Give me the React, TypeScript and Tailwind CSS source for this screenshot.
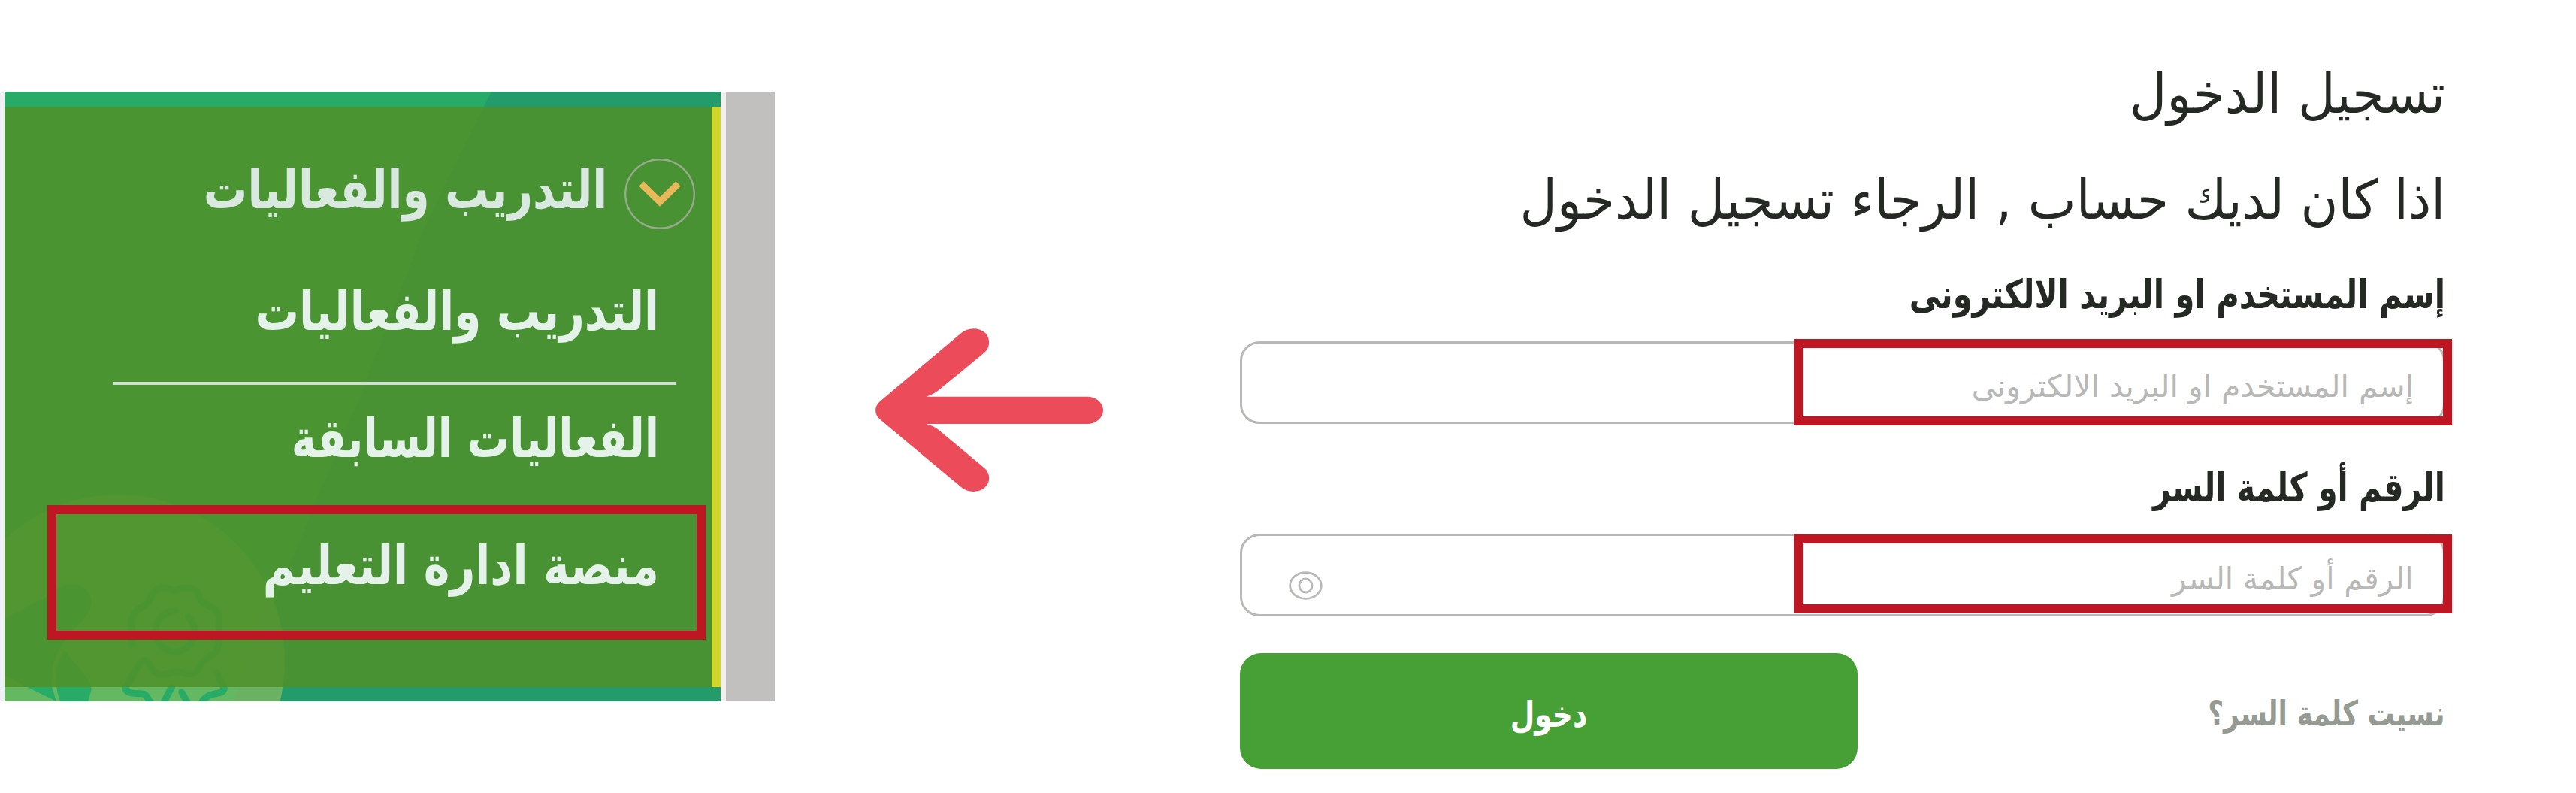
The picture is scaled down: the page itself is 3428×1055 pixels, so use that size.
import { ReactNode } from 'react';
import clsx from 'clsx';

// Line of Arabic text, condensed towards its right edge
function Line({ className, children }: { className?: string; children: ReactNode }) {
  return <span className={clsx('block whitespace-nowrap origin-right', className)}>{children}</span>;
}

function MenuBackground() {
  return (
    <svg className="absolute inset-0 w-full h-full" viewBox="0 0 953 811" preserveAspectRatio="none" fill="none">
      <rect width="953" height="811" fill="#27ab67" />
      <path d="M648 0 L597 101 L556 188 L476 398 L412 551 L339 728 L310 811 H953 V0 Z" fill="#249b6a" />
      <circle cx="151" cy="758" r="222" fill="#64b862" />
      <path d="M352 670 L312 792 L306 811 H366 Q378 740 352 670 Z" fill="#6bb163" />
      <g transform="translate(-6 638) scale(0.33333)">
        <path d="M18 190 L185 102 C230 75 240 52 290 52 C345 55 375 100 360 150 C345 190 300 220 265 270 C225 320 205 370 207 460 L225 519 L110 463 L18 415 Z" fill="#27ab67" />
        <path d="M258 315 C290 370 362 420 365 470 L352 519 H240 C213 440 218 370 258 315 Z" fill="#27ab67" />
        <g stroke="#27ab67" strokeWidth="27" strokeLinecap="round" strokeLinejoin="round">
          <path d="M527 290 C532 250 516 215 530 180 C542 140 588 148 600 108 C622 50 660 65 697 75 C738 65 780 48 798 105 C812 145 862 132 874 180 C880 215 868 240 874 290 C866 345 812 338 796 382 C774 428 735 405 697 402 C660 415 618 422 600 380 C588 350 566 350 556 372 L500 466 C508 500 560 480 580 492 L606 530" />
          <path d="M700 158 A77 82 0 1 0 753 182" />
          <path d="M866 405 L895 468 C888 500 835 470 800 530" />
          <path d="M685 463 L650 530" />
          <path d="M725 483 L752 530" />
        </g>
      </g>
      <rect y="20.5" width="953" height="771.5" fill="#4f912b" fillOpacity="0.87" />
      <rect x="941" y="20.5" width="12" height="771.5" fill="#d2d727" />
    </svg>
  );
}

function SideMenu() {
  return (
    <div className="mt-[122px] flex h-[811px] w-[1031px] shrink-0">
      <div className="w-1.5 bg-[#eef0f5]" />
      <div dir="rtl" className="relative w-[953px] overflow-hidden">
        <MenuBackground />
        <nav className="relative pt-[89px] pr-3 font-['DejaVu_Sans_Condensed','DejaVu_Sans',sans-serif] font-bold text-[71px] text-[#e5f2ea]">
          <div className="flex items-start gap-[23px] pr-[22px] h-[94px]">
            <svg className="w-[94px] h-[94px] shrink-0" viewBox="0 0 94 94" fill="none">
              <circle cx="47" cy="47" r="45.8" stroke="#96aa8d" strokeWidth="2.4" />
              <path d="M22.5 33.5 L47 57.5 L71.5 33.5" stroke="#e8b85a" strokeWidth="9" />
            </svg>
            <Line className="leading-[84px] scale-x-[0.912] text-[#d9e9e0]">التدريب والفعاليات</Line>
          </div>
          <Line className="mt-[59px] mr-[70px] leading-[101px] scale-x-[0.912]">التدريب والفعاليات</Line>
          <div className="mt-[43px] mr-[47px] w-[750px] h-[3.5px] bg-[#cfe0d0]" />
          <Line className="mt-[22px] mr-[70px] leading-[100px] scale-x-[0.88]">الفعاليات السابقة</Line>
          <div className="mt-[38px] mr-2 w-[876px] h-[179px] border-12 border-[#be1622] pr-[50px]">
            <Line className="leading-[138px] scale-x-[0.92]">منصة ادارة التعليم</Line>
          </div>
        </nav>
      </div>
      <div className="w-[7px] bg-[#f1f0ef]" />
      <div className="w-[65px] bg-[#c2c0bf]" />
    </div>
  );
}

function Arrow() {
  return (
    <svg className="ml-[134px] mt-[437px] w-[303px] h-[217px] shrink-0" viewBox="136 112 907 651" preserveAspectRatio="none">
      <path
        d="M478 130 C502 109 545 106 570 127 C594 147 595 187 570 208 L388 358 Q368 374 338 384 H979 C1014 384 1043 408 1043 438 C1043 468 1014 493 979 493 H338 Q368 501 388 517 L570 669 C595 690 595 728 570 748 C545 769 502 767 478 746 L155 476 C130 455 130 423 155 402 Z"
        fill="#ec4b5a"
      />
    </svg>
  );
}

function LoginForm() {
  return (
    <div dir="rtl" className="ml-[182px] mt-[75px] w-[1604px] shrink-0 text-[#242923] font-['DejaVu_Sans',sans-serif]">
      <Line className="text-[72px] leading-[100px] scale-x-[0.947]">تسجيل الدخول</Line>
      <Line className="mt-[41px] text-[72px] leading-[100px] scale-x-[0.943]">اذا كان لديك حساب , الرجاء تسجيل الدخول</Line>

      <Line className="mt-9 font-['DejaVu_Sans_Condensed','DejaVu_Sans',sans-serif] font-bold text-[53px] leading-[80px] scale-x-[0.875]">
        إسم المستخدم او البريد الالكترونى
      </Line>
      <div className="relative mt-[22px] h-[110px]">
        <div className="h-full rounded-[26px] border-3 border-[#b8b8b7] pr-[39px] pt-[5px] text-[41px] text-[#b8b8b7]">
          <Line className="leading-[104px]">إسم المستخدم او البريد الالكترونى</Line>
        </div>
        <div className="absolute -top-[3px] left-[737px] w-[876px] h-[115px] border-12 border-[#be1622]" />
      </div>

      <Line className="mt-[45px] font-['DejaVu_Sans_Condensed','DejaVu_Sans',sans-serif] font-bold text-[53px] leading-[80px] scale-x-[0.867]">
        الرقم أو كلمة السر
      </Line>
      <div className="relative mt-[21px] h-[110px]">
        <div className="flex h-full justify-between rounded-[26px] border-3 border-[#b8b8b7] pr-[39px] pl-[62px] text-[41px] text-[#b8b8b7]">
          <Line className="pt-[5px] leading-[104px] scale-x-[0.988]">الرقم أو كلمة السر</Line>
          <svg className="mt-[47px] w-[45px] h-[38px]" viewBox="0 0 45 38" fill="none" stroke="#b8b8b7" strokeWidth="2.8">
            <ellipse cx="22.5" cy="19" rx="20.8" ry="17.3" />
            <ellipse cx="22.5" cy="19" rx="8.6" ry="9" />
          </svg>
        </div>
        <div className="absolute top-px left-[737px] w-[876px] h-[105px] border-12 border-[#be1622]" />
      </div>

      <div className="mt-[49px] flex items-center justify-between font-['DejaVu_Sans_Condensed','DejaVu_Sans',sans-serif] font-bold">
        <Line className="pt-1.5 text-[46px] scale-x-[0.87] text-[#959b93]">نسيت كلمة السر؟</Line>
        <button className="w-[822px] h-[154px] rounded-[28px] bg-[#46a035] pt-[7px] text-[48px] text-white">
          <span className="inline-block scale-x-[0.87]">دخول</span>
        </button>
      </div>
    </div>
  );
}

export default function App() {
  return (
    <div className="flex w-[3428px] h-[1055px] items-start overflow-hidden bg-white">
      <SideMenu />
      <Arrow />
      <LoginForm />
    </div>
  );
}
